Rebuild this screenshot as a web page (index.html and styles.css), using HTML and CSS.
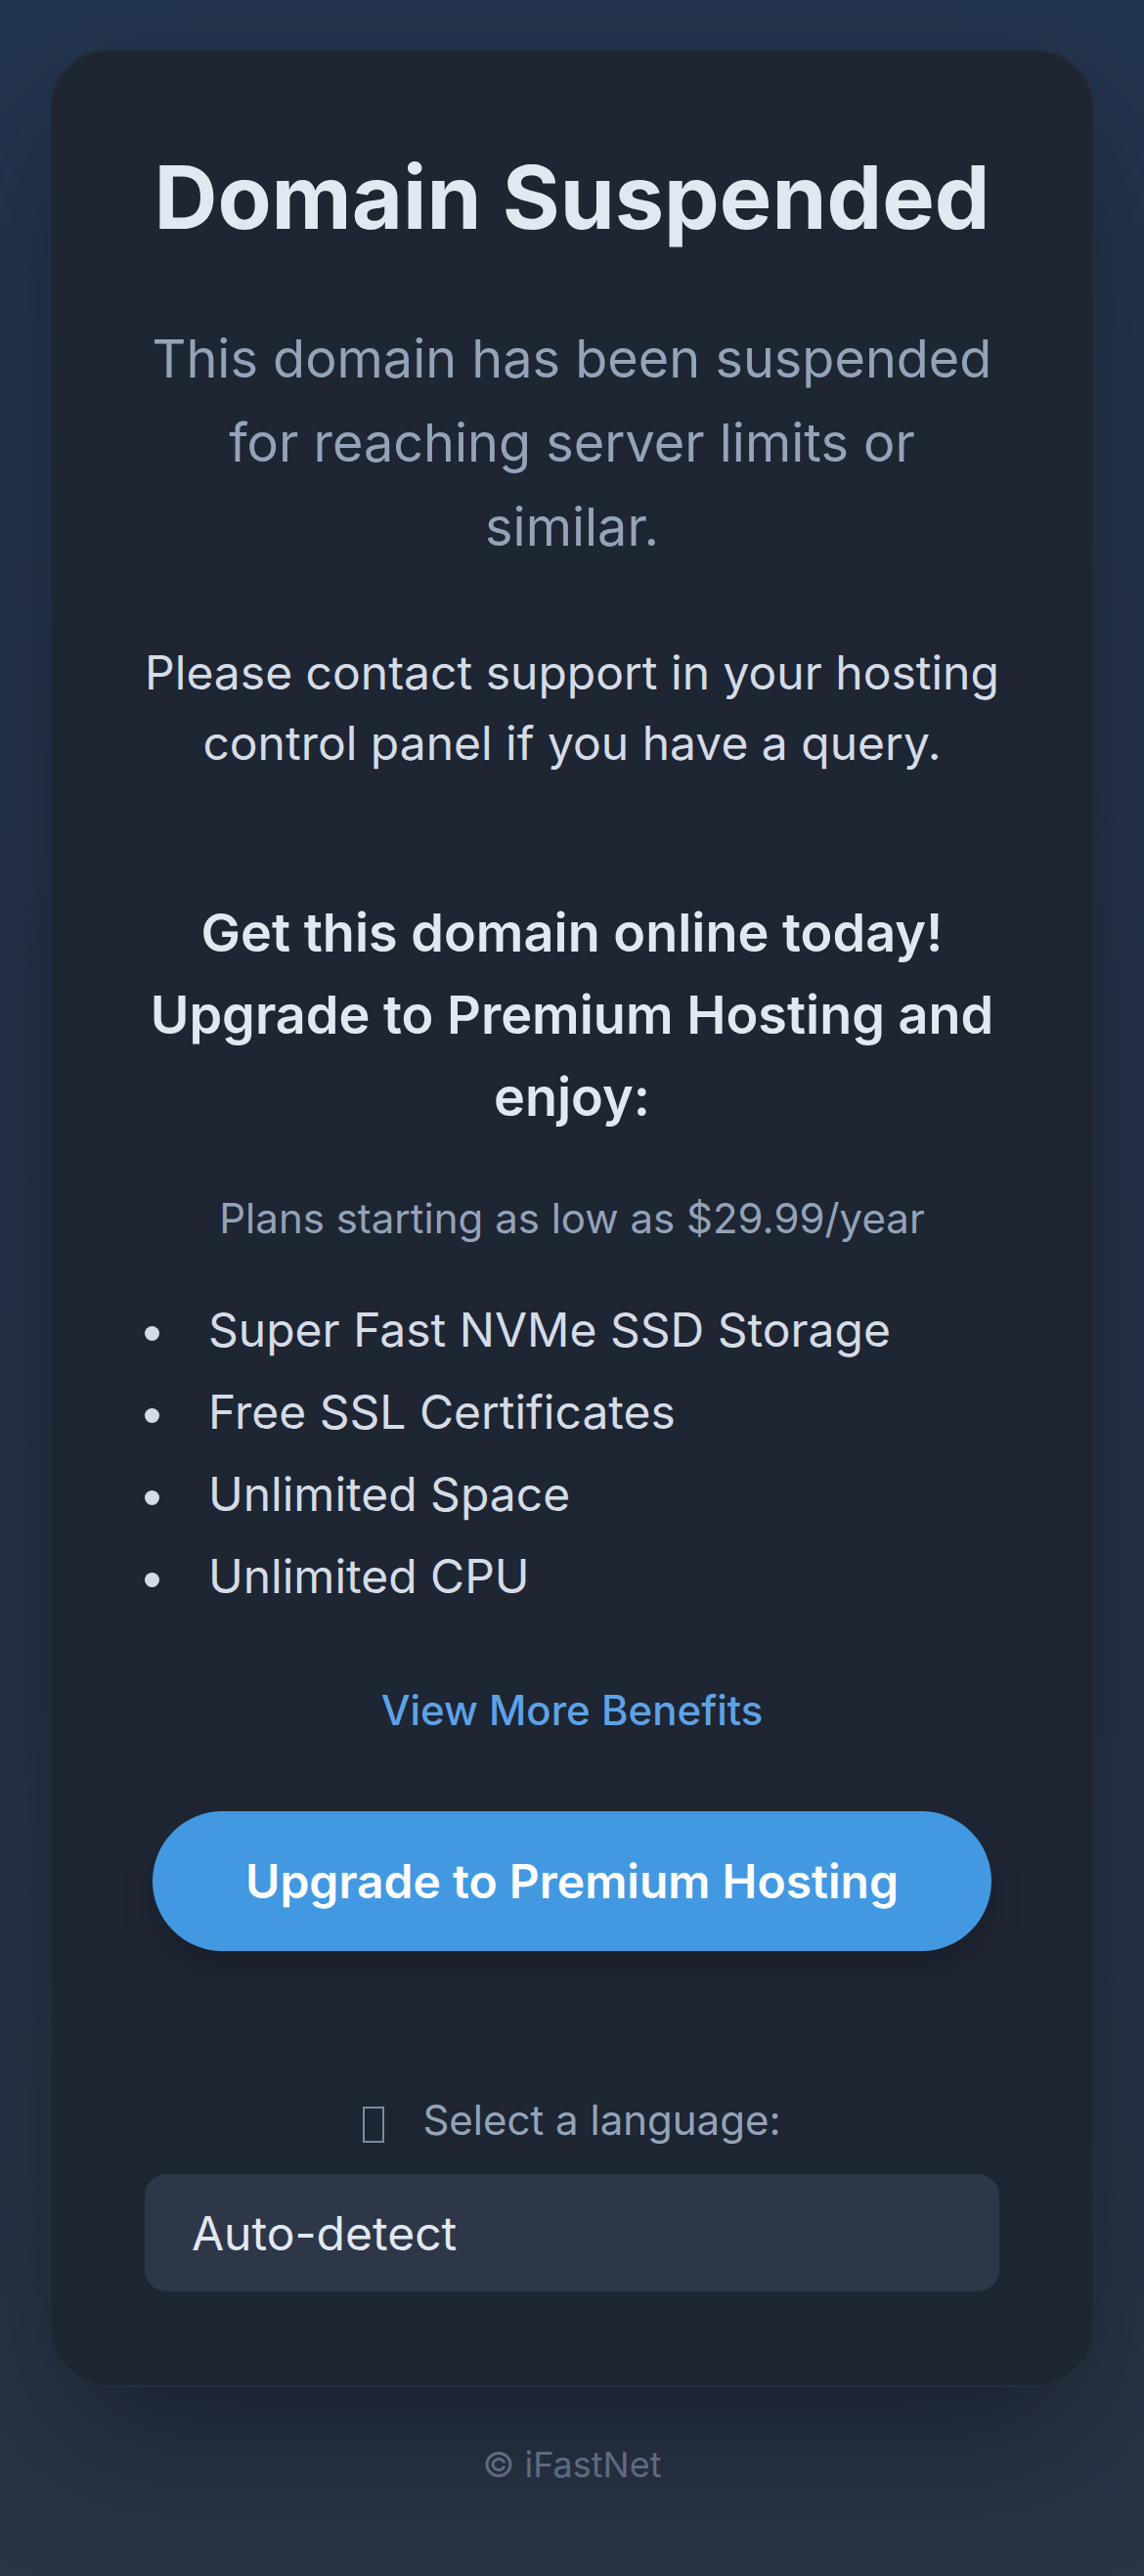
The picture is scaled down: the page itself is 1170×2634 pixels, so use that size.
FILE: index.html
```html
<!DOCTYPE html>
<html lang="en">
<head>
<meta charset="utf-8">
<title>Domain Suspended</title>
<link rel="stylesheet" href="styles.css">
</head>
<body>
<main class="page">
  <section class="card">
    <h1 class="title">Domain Suspended</h1>
    <p class="lead">This domain has been suspended for reaching server limits or similar.</p>
    <p class="contact">Please contact support in your hosting control panel if you have a query.</p>
    <h2 class="promo">Get this domain online today! Upgrade to Premium Hosting and enjoy:</h2>
    <p class="plans">Plans starting as low as $29.99/year</p>
    <ul class="benefits">
      <li>Super Fast NVMe SSD Storage</li>
      <li>Free SSL Certificates</li>
      <li>Unlimited Space</li>
      <li>Unlimited CPU</li>
    </ul>
    <a class="more" href="#">View More Benefits</a>
    <div class="cta-row"><a class="cta" href="#">Upgrade to Premium Hosting</a></div>
    <div class="lang">
      <label class="lang-label" for="lang"><span class="tofu"></span>Select a language:</label>
      <select id="lang" class="lang-select"><option>Auto-detect</option></select>
    </div>
  </section>
  <footer class="foot">© iFastNet</footer>
</main>
</body>
</html>
```

FILE: styles.css
```css
* { box-sizing: border-box; }

html, body {
  margin: 0;
  padding: 0;
}

body {
  min-height: 2634px;
  background: linear-gradient(to bottom, #24354f 0%, #263249 50%, #2b3445 100%);
  font-family: Inter, "Noto Sans", "Liberation Sans", sans-serif;
  color: #e2e8f0;
}

.page {
  display: flex;
  flex-direction: column;
  align-items: center;
  padding: 50px 50px 0;
}

.card {
  width: 1070px;
  background: #1e2533;
  border: 2px solid rgba(255, 255, 255, 0.045);
  border-radius: 62px;
  padding: 96px 96px 96px;
  text-align: center;
  box-shadow: 0 60px 140px -20px rgba(10, 14, 24, 0.55);
}

.title {
  margin: 0 0 68px;
  font-size: 90px;
  line-height: 108px;
  font-weight: 700;
  color: #e2e8f0;
}

.lead {
  margin: 0 0 70px;
  font-size: 54px;
  line-height: 86px;
  color: #94a3b8;
}

.contact {
  margin: 0 0 116px;
  font-size: 48px;
  line-height: 72px;
  color: #d5dce6;
}

.promo {
  margin: 0 0 50px;
  font-size: 54px;
  line-height: 84px;
  font-weight: 600;
  color: #e2e8f0;
}

.plans {
  margin: 0 0 41px;
  font-size: 42px;
  line-height: 63px;
  color: #94a3b8;
}

.benefits {
  list-style: none;
  margin: 0 0 63px;
  padding: 0;
  text-align: left;
}

.benefits li {
  display: flex;
  align-items: center;
  font-size: 48px;
  line-height: 84px;
  color: #d5dce6;
}

.benefits li::before {
  content: "";
  flex: none;
  width: 15px;
  height: 15px;
  margin: 6px 50px 0 0;
  border-radius: 50%;
  background: #d5dce6;
}

.more {
  display: block;
  font-size: 42px;
  line-height: 63px;
  font-weight: 500;
  color: #5ea2e6;
  text-decoration: none;
}

.cta-row {
  margin-top: 72px;
  display: flex;
  justify-content: center;
}

.cta {
  display: inline-block;
  padding: 35px 95px;
  font-size: 48px;
  line-height: 73px;
  font-weight: 600;
  color: #ffffff;
  background: #4299e1;
  border-radius: 999px;
  text-decoration: none;
  box-shadow: 0 20px 40px -10px rgba(0, 0, 0, 0.25);
}

.lang {
  margin-top: 141px;
}

.lang-label {
  display: flex;
  justify-content: center;
  align-items: center;
  font-size: 42px;
  line-height: 63px;
  color: #94a3b8;
}

.tofu {
  display: inline-block;
  width: 22px;
  height: 37px;
  margin: 10px 39px 0 0;
  border: 2px solid #7f8aa0;
}

.lang-select {
  display: block;
  width: 100%;
  height: 120px;
  margin-top: 24px;
  padding: 0 48px;
  font-family: Inter, "Noto Sans", "Liberation Sans", sans-serif;
  font-size: 48px;
  color: #e2e8f0;
  background: #2d3748;
  border: none;
  border-radius: 22px;
  appearance: none;
  -webkit-appearance: none;
  outline: none;
}

.foot {
  margin-top: 52px;
  font-size: 36px;
  line-height: 54px;
  color: #5d6b80;
}
```
